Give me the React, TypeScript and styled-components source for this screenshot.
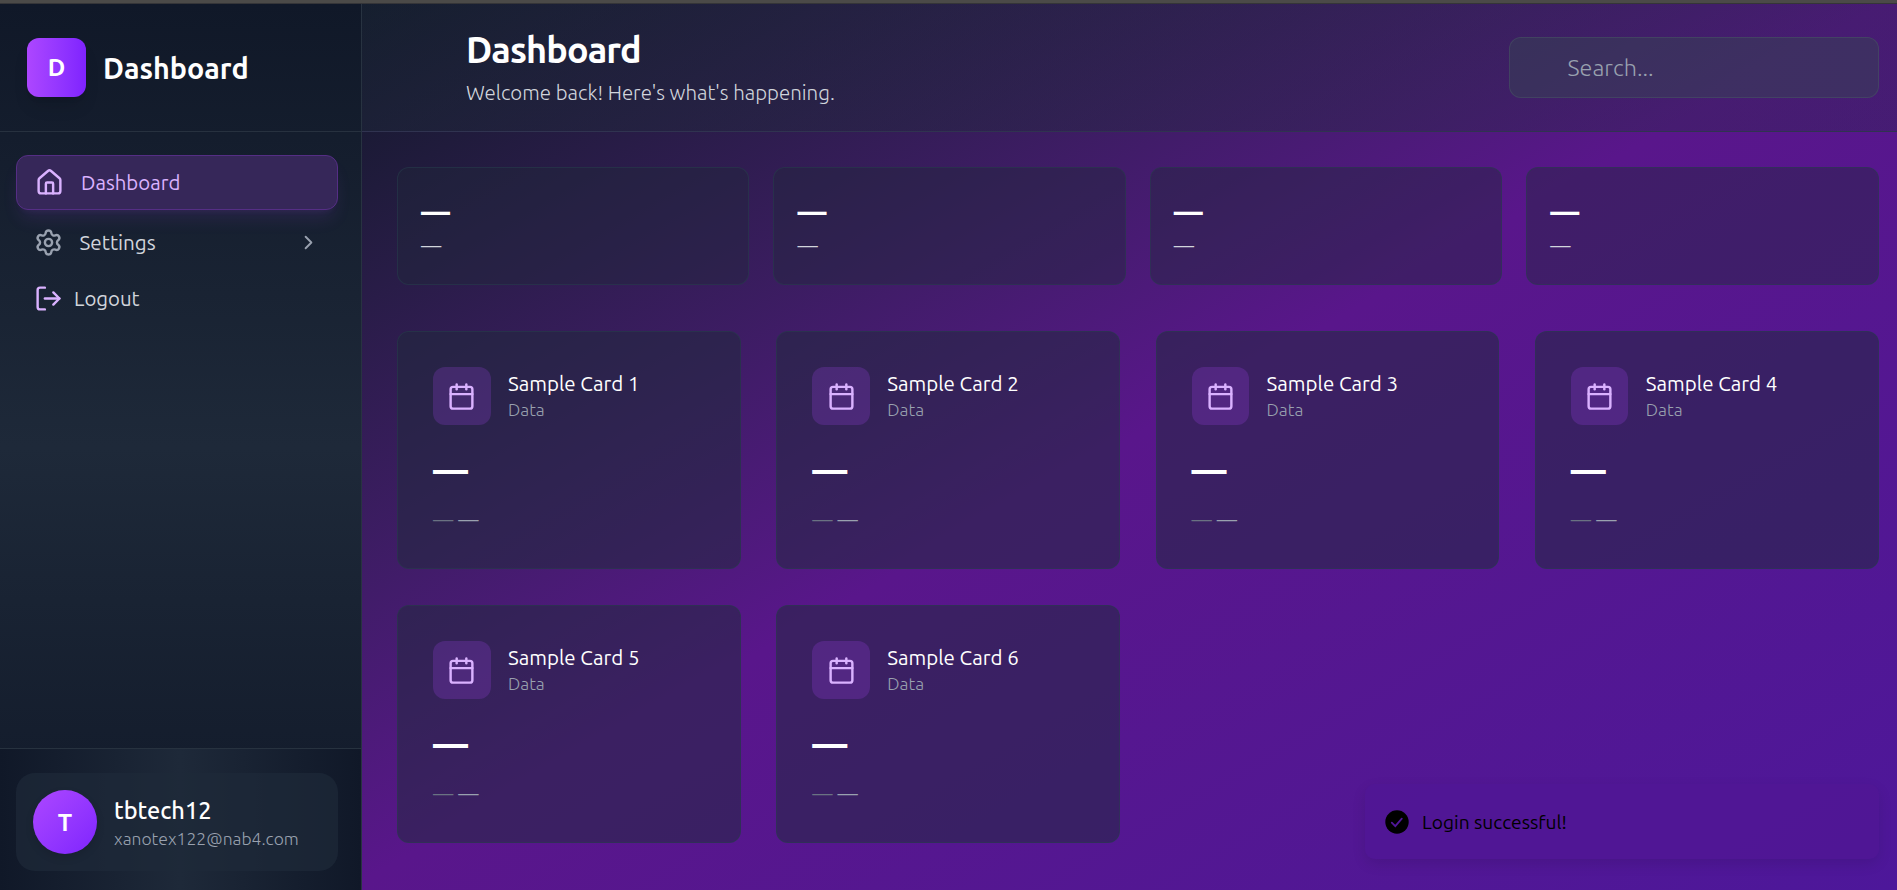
import React from 'react';
import styled, { createGlobalStyle } from 'styled-components';
import { House, Settings, LogOut, ChevronRight, Calendar } from 'lucide-react';

const GlobalStyle = createGlobalStyle`
  *, *::before, *::after { box-sizing: border-box; }
  body {
    margin: 0;
    background: #101828;
    font-family: Ubuntu, 'Noto Sans', 'Open Sans', sans-serif;
    color: #fff;
    overflow: hidden;
  }
  h1, h2, h3, p { margin: 0; }
`;

const Page = styled.div`
  height: 890px;
  display: flex;
  flex-direction: column;
  overflow: hidden;
`;

const WindowEdge = styled.div`
  flex: none;
  height: 4px;
  background: #4b4a48;
  border-bottom: 1px solid #353538;
`;

const Shell = styled.div`
  flex: 1;
  min-height: 0;
  display: flex;
`;

const Sidebar = styled.aside`
  flex: none;
  width: 362px;
  display: flex;
  flex-direction: column;
  border-right: 1px solid #283341;
  background: linear-gradient(to bottom in oklab, #101828, #1e2939 50%, #101828);
`;

const Brand = styled.div`
  height: 128px;
  display: flex;
  align-items: center;
  gap: 17px;
  padding: 0 27px;
  border-bottom: 1px solid #27313f;
`;

const Logo = styled.div`
  width: 59px;
  height: 59px;
  border-radius: 12px;
  display: grid;
  place-items: center;
  background: linear-gradient(to right in oklab, #ad46ff, #7f22fe);
  box-shadow: 0 12px 18px -4px rgba(0, 0, 0, 0.12), 0 5px 7px -5px rgba(0, 0, 0, 0.12);
  font-size: 24px;
  font-weight: 700;
`;

const BrandName = styled.span`
  font-size: 28.7px;
  line-height: 36px;
  font-weight: 700;
`;

const Nav = styled.nav`
  flex: 1;
  display: flex;
  flex-direction: column;
  padding: 23px 23px 0 16px;
  gap: 3px;
`;

const NavItem = styled.a<{ $active?: boolean; $gap: number; $accent?: boolean }>`
  height: 55px;
  display: flex;
  align-items: center;
  gap: ${(p) => p.$gap}px;
  padding: 0 18px;
  border-radius: 12px;
  border: ${(p) => (p.$active ? '1px solid #552e85' : 'none')};
  background: ${(p) => (p.$active ? '#362759' : 'transparent')};
  box-shadow: ${(p) => (p.$active ? '0 12px 18px -4px rgba(173,70,255,.12), 0 5px 7px -5px rgba(173,70,255,.12)' : 'none')};
  color: ${(p) => (p.$active ? '#dab2ff' : '#d1d5dc')};
  font-size: 20.4px;

  svg { color: ${(p) => (p.$active || p.$accent ? '#dab2ff' : '#99a1af')}; }
`;

const NavGroup = styled(NavItem)`
  height: 56px;
  padding-top: 2px;
  margin-bottom: -1px;
  font-size: 20.7px;
`;

const NavLabel = styled.span`
  flex: 1;
`;

const Account = styled.div`
  height: 142px;
  padding: 24px 23px 0 16px;
  border-top: 1px solid #27323f;
  background: linear-gradient(to right in oklab, #101828, #1e2939 50%, #101828);
`;

const AccountCard = styled.div`
  height: 98px;
  display: flex;
  align-items: center;
  gap: 17px;
  padding: 0 17px;
  border-radius: 19px;
  background: rgba(30, 41, 57, 0.7);
`;

const Avatar = styled.div`
  width: 64px;
  height: 64px;
  border-radius: 50%;
  display: grid;
  place-items: center;
  background: linear-gradient(to bottom right in oklab, #ad46ff, #7f22fe);
  box-shadow: 0 4px 8px rgba(0, 0, 0, 0.12);
  font-size: 24px;
  font-weight: 700;
`;

const AccountName = styled.p`
  font-size: 23.5px;
  line-height: 31px;
  font-weight: 500;
  margin-top: 2px;
`;

const AccountMail = styled.p`
  font-size: 17.5px;
  line-height: 26px;
  color: #99a1af;
  font-weight: 300;
`;

const Main = styled.main`
  flex: 1;
  min-width: 0;
  display: flex;
  flex-direction: column;
  background: linear-gradient(to bottom right in oklab, #101828 0%, #59168b 49.5%, #4d179a 100%);
`;

const TopBar = styled.header`
  height: 128px;
  flex: none;
  display: flex;
  justify-content: space-between;
  align-items: center;
  padding: 0 18.5px 0 104px;
  background: linear-gradient(to right, rgba(30, 41, 57, 0.4), rgba(30, 41, 57, 0.3));
  border-bottom: 1px solid #303350;
`;

const PageTitle = styled.h1`
  font-size: 36px;
  line-height: 43px;
  font-weight: 700;
  letter-spacing: -0.9px;
  margin-top: 1px;
`;

const PageLead = styled.p`
  font-size: 20.5px;
  line-height: 30px;
  margin-top: 7px;
  font-weight: 300;
  color: #d1d5dc;
`;

const Search = styled.input`
  width: 370px;
  height: 61px;
  padding: 0 20px 2px 58px;
  border: 1px solid rgba(74, 85, 101, 0.5);
  border-radius: 12px;
  outline: none;
  background: rgba(54, 65, 83, 0.5);
  color: #fff;
  font-family: inherit;
  font-size: 23.4px;
  font-weight: 300;

  &::placeholder { color: #99a1af; opacity: 1; }
`;

const Content = styled.div`
  padding: 35px 18.5px 0 35px;
`;

const StatGrid = styled.section`
  display: grid;
  grid-template-columns: repeat(4, 1fr);
  gap: 24px;
`;

const Panel = styled.article`
  border: 1px solid rgba(40, 64, 78, 0.5);
  border-radius: 12px;
  background: rgba(30, 41, 57, 0.5);
`;

const StatPanel = styled(Panel)`
  height: 118px;
  padding: 24px 23px 0;
  background: rgba(30, 41, 57, 0.42);
`;

const Dash = styled.p<{ $size: number; $line: number; $tone?: string; $weight: number }>`
  font-size: ${(p) => p.$size}px;
  line-height: ${(p) => p.$line}px;
  font-weight: ${(p) => p.$weight};
  color: ${(p) => p.$tone ?? '#fff'};
`;

const CardGrid = styled.section`
  display: grid;
  grid-template-columns: repeat(4, 1fr);
  gap: 36px 35.6px;
  margin-top: 46px;
`;

const CardPanel = styled(Panel)`
  height: 238px;
  padding: 35px;
`;

const CardHead = styled.div`
  display: flex;
  align-items: center;
  gap: 17.4px;
  height: 58px;
`;

const IconTile = styled.div`
  width: 57.6px;
  height: 57.6px;
  border-radius: 12px;
  display: grid;
  place-items: center;
  color: #dab2ff;
  background: rgba(173, 70, 255, 0.2);
`;

const CardTitle = styled.h3`
  font-size: 20.5px;
  line-height: 28px;
  font-weight: 400;
`;

const CardKind = styled.p`
  font-size: 17.5px;
  line-height: 24px;
  font-weight: 300;
  color: #99a1af;
`;

const CardValue = styled.div`
  margin-top: 24px;
`;

const CardFoot = styled.div`
  display: flex;
  gap: 5px;
  margin-top: 16px;
`;

const Toast = styled.div`
  position: absolute;
  left: 1365px;
  top: 784px;
  width: 514px;
  height: 75px;
  display: flex;
  align-items: center;
  gap: 13px;
  padding: 0 20px;
  border-radius: 10px;
  box-shadow: 0 5px 14px rgba(0, 0, 0, 0.1);
  background: rgba(80, 22, 149, 0.9);
  color: #000;
  font-size: 19.2px;
  font-weight: 400;
`;

const cards = [1, 2, 3, 4, 5, 6];
const stats = [1, 2, 3, 4];

function CheckBadge() {
  return (
    <svg width="24" height="24" viewBox="0 0 24 24" aria-hidden="true">
      <circle cx="12" cy="12" r="11.7" fill="#000" />
      <path d="M6.8 12.6l3.5 3.6 6.5-7.6" fill="none" stroke="#51169a" strokeWidth="1.8" strokeLinecap="round" />
    </svg>
  );
}

export default function App() {
  return (
    <Page>
      <GlobalStyle />
      <WindowEdge />
      <Shell>
        <Sidebar>
          <Brand>
            <Logo>D</Logo>
            <BrandName>Dashboard</BrandName>
          </Brand>
          <Nav>
            <NavItem $active $gap={17}>
              <House size={29} />
              <NavLabel>Dashboard</NavLabel>
            </NavItem>
            <NavGroup $gap={16.5}>
              <Settings size={29} />
              <NavLabel>Settings</NavLabel>
              <ChevronRight size={23} />
            </NavGroup>
            <NavItem $gap={11} $accent>
              <LogOut size={29} />
              <NavLabel>Logout</NavLabel>
            </NavItem>
          </Nav>
          <Account>
            <AccountCard>
              <Avatar>T</Avatar>
              <div>
                <AccountName>tbtech12</AccountName>
                <AccountMail>xanotex122@nab4.com</AccountMail>
              </div>
            </AccountCard>
          </Account>
        </Sidebar>
        <Main>
          <TopBar>
            <div>
              <PageTitle>Dashboard</PageTitle>
              <PageLead>Welcome back! Here's what's happening.</PageLead>
            </div>
            <Search placeholder="Search..." />
          </TopBar>
          <Content>
            <StatGrid>
              {stats.map((n) => (
                <StatPanel key={n}>
                  <Dash $size={29} $line={38} $weight={700}>—</Dash>
                  <Dash $size={20.4} $line={31} $weight={300} $tone="#d1d5dc">—</Dash>
                </StatPanel>
              ))}
            </StatGrid>
            <CardGrid>
              {cards.map((n) => (
                <CardPanel key={n}>
                  <CardHead>
                    <IconTile>
                      <Calendar size={29} />
                    </IconTile>
                    <div>
                      <CardTitle>Sample Card {n}</CardTitle>
                      <CardKind>Data</CardKind>
                    </div>
                  </CardHead>
                  <CardValue>
                    <Dash $size={35} $line={43} $weight={700}>—</Dash>
                  </CardValue>
                  <CardFoot>
                    <Dash $size={20.4} $line={24} $weight={400} $tone="#6a7282">—</Dash>
                    <Dash $size={20.4} $line={24} $weight={300} $tone="#99a1af">—</Dash>
                  </CardFoot>
                </CardPanel>
              ))}
            </CardGrid>
          </Content>
        </Main>
      </Shell>
      <Toast role="status">
        <CheckBadge />
        <span>Login successful!</span>
      </Toast>
    </Page>
  );
}
